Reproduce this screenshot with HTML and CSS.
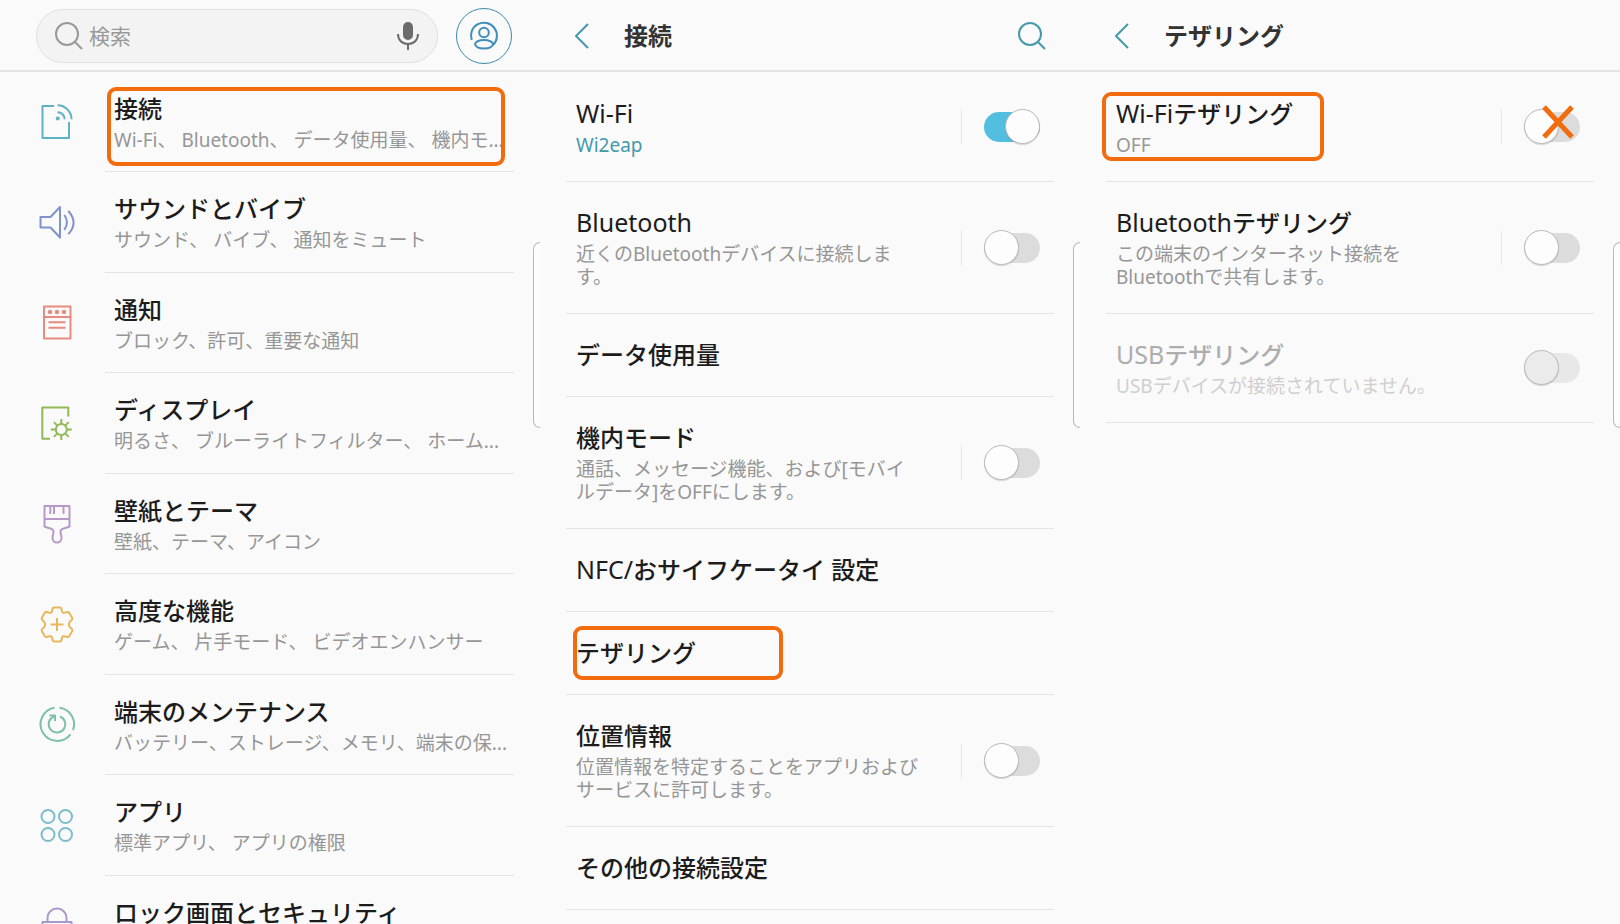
FILE: index.html
```
<!DOCTYPE html>
<html lang="ja">
<head>
    <meta charset="UTF-8">
    <meta name="viewport" content="width=device-width, initial-scale=1.0">
    <title>設定</title>
    <link rel="stylesheet" href="styles.css">
</head>
<body>
    <main class="screens">

        <!-- settings -->
        <section class="screen">
            <header class="bar search-bar">
                <label class="search">
                    <svg class="search-icon" viewBox="0 0 28 28"><circle cx="12" cy="12" r="11"/><path d="M20 20l7 7"/></svg>
                    <input type="text" placeholder="検索" aria-label="検索">
                    <button class="mic" type="button" aria-label="音声検索">
                        <svg viewBox="0 0 22 30"><rect class="mic-body" x="6" y="1" width="10" height="18" rx="5"/><path d="M1 13c0 6 4 10 10 10s10-4 10-10M11 23v6"/></svg>
                    </button>
                </label>
                <button class="account" type="button" aria-label="アカウント">
                    <svg viewBox="0 0 28 28"><path d="M1.700 18A13 13 0 1 1 23 23"/><circle cx="14" cy="10.500" r="4.800"/><ellipse cx="14" cy="22.300" rx="9" ry="4.300"/></svg>
                </button>
            </header>
            <nav class="menu">
                <a class="item" href="#">
                    <svg class="icon teal" viewBox="0 0 40 40"><path d="M17 4H5.500v32H32V20M20.500 10.300a7 7 0 0 1 7.200 7M20.500 3.300a14 14 0 0 1 14 14"/><circle class="dot" cx="20.700" cy="16.500" r="2"/></svg>
                    <span class="text">
                        <span class="title">接続</span>
                        <span class="sub">Wi-Fi、 Bluetooth、 データ使用量、 機内モ...</span>
                        <span class="mark mark-connect"></span>
                    </span>
                </a>
                <a class="item" href="#">
                    <svg class="icon blue" viewBox="0 0 40 40"><path d="M3.500 14h10L23 4v30.500l-9.500-10h-10zM27.300 12q5.400 7.400 0 14.800M31.300 8q10.600 11.500 0 23.200"/></svg>
                    <span class="text">
                        <span class="title">サウンドとバイブ</span>
                        <span class="sub">サウンド、 バイブ、 通知をミュート</span>
                    </span>
                </a>
                <a class="item" href="#">
                    <svg class="icon red" viewBox="0 0 40 40"><path d="M7 3.500h26.500v32H7zM7 14h26.500M11.500 19.300h17M11.500 24.700h17"/><g class="dot"><circle cx="13" cy="9" r="2.200"/><circle cx="20" cy="9" r="2.200"/><circle cx="27" cy="9" r="2.200"/></g></svg>
                    <span class="text">
                        <span class="title">通知</span>
                        <span class="sub">ブロック、許可、重要な通知</span>
                    </span>
                </a>
                <a class="item" href="#">
                    <svg class="icon green" viewBox="0 0 40 40"><path d="M31.300 12.500V3.500h-26v31.300H13"/><circle cx="24.300" cy="25.500" r="5.500"/><path d="M24.300 20v-5M24.300 31v5M18.800 25.500h-5M29.800 25.500h5M20.400 21.600l-3.500-3.500M28.200 29.400l3.500 3.500M28.200 21.600l3.500-3.500M20.400 29.400l-3.500 3.500"/></svg>
                    <span class="text">
                        <span class="title">ディスプレイ</span>
                        <span class="sub">明るさ、 ブルーライトフィルター、 ホーム...</span>
                    </span>
                </a>
                <a class="item" href="#">
                    <svg class="icon purple" viewBox="0 0 40 40"><path d="M7.500 2h25v20.500c-4 2-9 1.500-9 5 0 2.500 1 4 1 6.500a4.500 4.500 0 0 1-9 0c0-2.500 1-4 1-6.500 0-3.500-5-3-9-5zM7.500 15h25M13.300 2v8M17 2v8M26.500 2v8"/></svg>
                    <span class="text">
                        <span class="title">壁紙とテーマ</span>
                        <span class="sub">壁紙、テーマ、アイコン</span>
                    </span>
                </a>
                <a class="item" href="#">
                    <svg class="icon yellow" viewBox="0 0 40 40"><path d="M17 2.500h6q1.200 0 1.500 1.500l.5 2.500q.4 1.400 1.800 1.400l3.600-.9q1.200-.2 1.900.9l2.800 4.800q.7 1.300-.3 2.200l-1.900 1.900q-1 1.100-1 2.700t1 2.700l1.900 1.900q1 .9.300 2.200l-2.800 4.800q-.7 1.100-1.900.9l-3.600-.9q-1.400 0-1.800 1.400l-.5 2.500q-.3 1.500-1.500 1.500h-6q-1.200 0-1.500-1.500l-.5-2.500q-.4-1.400-1.800-1.400l-3.600.9q-1.200.2-1.900-.9l-2.800-4.800q-.7-1.300.3-2.200l1.900-1.900q1-1.100 1-2.700t-1-2.700l-1.900-1.900q-1-.9-.3-2.200l2.800-4.800q.7-1.100 1.900-.9l3.600.9q1.400 0 1.800-1.400l.5-2.500q.3-1.500 1.500-1.500zM20 13v13M13.500 19.500h13"/></svg>
                    <span class="text">
                        <span class="title">高度な機能</span>
                        <span class="sub">ゲーム、 片手モード、 ビデオエンハンサー</span>
                    </span>
                </a>
                <a class="item" href="#">
                    <svg class="icon mint" viewBox="0 0 40 40"><path d="M22.500 2.700a16.700 16.700 0 0 1 13.500 22.500M33.500 29.300A16.700 16.700 0 1 1 17.500 2.700M23 11.500A8.300 8.300 0 1 1 14 13.500L17.500 11M12.500 10.500h5.500V16"/></svg>
                    <span class="text">
                        <span class="title">端末のメンテナンス</span>
                        <span class="sub">バッテリー、ストレージ、メモリ、端末の保...</span>
                    </span>
                </a>
                <a class="item" href="#">
                    <svg class="icon sky" viewBox="0 0 40 40"><circle cx="11" cy="10.500" r="6.500"/><circle cx="28.500" cy="10.500" r="6.500"/><circle cx="11" cy="28.500" r="6.500"/><circle cx="28.500" cy="28.500" r="6.500"/></svg>
                    <span class="text">
                        <span class="title">アプリ</span>
                        <span class="sub">標準アプリ、 アプリの権限</span>
                    </span>
                </a>
                <a class="item" href="#">
                    <svg class="icon violet" viewBox="0 0 40 40"><path d="M10.500 16v-4a9.500 9.500 0 0 1 19 0v4M5.500 16h29v20h-29z"/></svg>
                    <span class="text">
                        <span class="title">ロック画面とセキュリティ</span>
                    </span>
                </a>
            </nav>
            <span class="edge"></span>
        </section>

        <!-- connections -->
        <section class="screen">
            <header class="bar">
                <button class="back" type="button" aria-label="戻る">
                    <svg viewBox="0 0 16 26"><path d="M14 1L2 13l12 12"/></svg>
                </button>
                <h1>接続</h1>
                <button class="find" type="button" aria-label="検索">
                    <svg viewBox="0 0 28 28"><circle cx="12" cy="12" r="11"/><path d="M20 20l7 7"/></svg>
                </button>
            </header>
            <div class="list">
                <div class="row">
                    <label class="text" for="wifi">
                        <span class="title"><span class="latin">Wi-Fi</span></span>
                        <span class="sub on">Wi2eap</span>
                    </label>
                    <span class="toggle"><input type="checkbox" id="wifi" checked></span>
                </div>
                <div class="row">
                    <label class="text" for="bluetooth">
                        <span class="title"><span class="latin">Bluetooth</span></span>
                        <span class="sub">近くのBluetoothデバイスに接続します。</span>
                    </label>
                    <span class="toggle"><input type="checkbox" id="bluetooth"></span>
                </div>
                <a class="row" href="#"><span class="title">データ使用量</span></a>
                <div class="row">
                    <label class="text" for="airplane">
                        <span class="title">機内モード</span>
                        <span class="sub">通話、メッセージ機能、および[モバイルデータ]をOFFにします。</span>
                    </label>
                    <span class="toggle"><input type="checkbox" id="airplane"></span>
                </div>
                <a class="row" href="#"><span class="title"><span class="latin">NFC/</span>おサイフケータイ 設定</span></a>
                <a class="row" href="#"><span class="title">テザリング</span><span class="mark mark-tether"></span></a>
                <div class="row">
                    <label class="text" for="location">
                        <span class="title">位置情報</span>
                        <span class="sub">位置情報を特定することをアプリおよびサービスに許可します。</span>
                    </label>
                    <span class="toggle"><input type="checkbox" id="location"></span>
                </div>
                <a class="row" href="#"><span class="title">その他の接続設定</span></a>
            </div>
            <span class="edge"></span>
        </section>

        <!-- tethering -->
        <section class="screen">
            <header class="bar">
                <button class="back" type="button" aria-label="戻る">
                    <svg viewBox="0 0 16 26"><path d="M14 1L2 13l12 12"/></svg>
                </button>
                <h1>テザリング</h1>
            </header>
            <div class="list">
                <div class="row">
                    <label class="text" for="wifi-tether">
                        <span class="title"><span class="latin">Wi-Fi</span>テザリング</span>
                        <span class="sub">OFF</span>
                    </label>
                    <span class="toggle">
                        <input type="checkbox" id="wifi-tether">
                        <svg class="cross" viewBox="0 0 32 34"><path d="M2 2l28 30M30 2L2 32"/></svg>
                    </span>
                    <span class="mark mark-wifi"></span>
                </div>
                <div class="row">
                    <label class="text" for="bt-tether">
                        <span class="title"><span class="latin">Bluetooth</span>テザリング</span>
                        <span class="sub">この端末のインターネット接続をBluetoothで共有します。</span>
                    </label>
                    <span class="toggle"><input type="checkbox" id="bt-tether"></span>
                </div>
                <div class="row disabled">
                    <label class="text" for="usb-tether">
                        <span class="title"><span class="latin">USB</span>テザリング</span>
                        <span class="sub">USBデバイスが接続されていません。</span>
                    </label>
                    <span class="toggle"><input type="checkbox" id="usb-tether" disabled></span>
                </div>
            </div>
            <span class="edge"></span>
        </section>

    </main>
</body>
</html>
```
FILE: styles.css
```
* {
    margin: 0;
    padding: 0;
    box-sizing: border-box;
}
body {
    font-family: "Noto Sans", "Noto Sans CJK JP", sans-serif;
    background-color: #fafafa;
    color: #1c1c1c;
    overflow: hidden;
}
a {
    color: inherit;
    text-decoration: none;
}
button {
    background: none;
    border: none;
    cursor: pointer;
}
svg {
    display: block;
    fill: none;
    stroke: currentColor;
    stroke-width: 2;
    stroke-linejoin: round;
    overflow: visible;
}
.screens {
    display: grid;
    grid-template-columns: repeat(3, 1fr);
    height: 100vh;
}
.screen {
    position: relative;
    min-width: 0;
    overflow: hidden;
}

/* top bars */
.bar {
    display: flex;
    align-items: center;
    height: 72px;
    padding: 2px 34px 0;
    border-bottom: 2px solid #e4e4e4;
}
.bar h1 {
    flex: 1;
    margin-left: 34px;
    font-size: 24px;
    line-height: 34px;
    font-weight: 700;
    color: #333;
}
.back, .find {
    color: #4499ab;
}
.back svg {
    width: 16px;
    height: 26px;
}
.find svg {
    width: 28px;
    height: 28px;
}
.search-bar {
    gap: 18px;
    padding: 2px 28px 0 36px;
}
.search {
    flex: 1;
    display: flex;
    align-items: center;
    gap: 6px;
    height: 54px;
    padding: 0 18px;
    background-color: #f3f3f3;
    border: 1px solid #e0e0e0;
    border-radius: 27px;
}
.search-icon {
    width: 28px;
    height: 28px;
    color: #999;
}
.search input {
    flex: 1;
    min-width: 0;
    border: none;
    outline: none;
    background: none;
    font: inherit;
    font-size: 21px;
}
.search input::placeholder {
    color: #999;
}
.mic {
    color: #6b6b6b;
}
.mic svg {
    width: 22px;
    height: 30px;
}
.mic-body {
    fill: currentColor;
    stroke: none;
}
.account {
    display: flex;
    align-items: center;
    justify-content: center;
    width: 56px;
    height: 56px;
    border: 1px solid #3f87ad;
    border-radius: 50%;
    color: #3f8fb8;
}
.account svg {
    width: 28px;
    height: 28px;
}

/* shared text */
.text {
    display: block;
    flex: 1;
    min-width: 0;
}
.title, .sub {
    display: block;
}
.title {
    font-size: 24px;
    line-height: 34px;
    font-weight: 500;
}
.latin {
    font-size: 25px;
    line-height: 25px;
    font-weight: 400;
}
.sub {
    margin-top: 3px;
    font-size: 19px;
    line-height: 23px;
    color: #969696;
}
.sub.on {
    color: #4499ab;
}

/* main menu */
.item {
    display: flex;
    align-items: center;
    gap: 28px;
    height: 100px;
    padding: 0 26px 0 37px;
}
.item:nth-child(even) {
    height: 101px;
}
.item .text {
    position: relative;
    height: 100%;
    padding: 20px 0 0 9px;
    border-bottom: 1px solid #e4e4e4;
}
.item .sub {
    white-space: nowrap;
}
.icon {
    width: 40px;
    height: 40px;
}
.icon .dot {
    fill: currentColor;
    stroke: none;
}
.teal { color: #5fb2c2; }
.blue { color: #7f93cc; }
.red { color: #e58b80; }
.green { color: #92b958; }
.purple { color: #b898c8; }
.yellow { color: #e8b75a; }
.mint { color: #7cc0a8; }
.sky { color: #7dbccb; }
.violet { color: #a69acb; }

/* option lists */
.list {
    padding: 1px 26px 0;
}
.row {
    position: relative;
    display: flex;
    align-items: center;
    padding: 24px 14px 24px 10px;
    border-bottom: 1px solid #e4e4e4;
}
.row .text {
    padding-right: 40px;
}
.toggle {
    position: relative;
    display: flex;
    align-items: center;
    height: 34px;
    padding-left: 22px;
    border-left: 1px solid #e6e6e6;
}
.toggle input {
    appearance: none;
    position: relative;
    width: 56px;
    height: 30px;
    border-radius: 15px;
    background-color: #dcdcdc;
    cursor: pointer;
}
.toggle input::after {
    content: "";
    position: absolute;
    top: -3px;
    left: 0;
    width: 33px;
    height: 33px;
    border: 1px solid #bababa;
    border-radius: 50%;
    background-color: #fdfdfd;
    box-shadow: 0 1px 1px rgba(0, 0, 0, 0.15);
}
.toggle input:checked {
    background-color: #52bfe0;
}
.toggle input:checked::after {
    left: auto;
    right: 0;
}
.disabled .title {
    color: #adadad;
}
.disabled .sub {
    color: #cfcfcf;
}
.disabled .toggle {
    border-color: transparent;
}
.disabled .toggle input {
    background-color: #e8e8e8;
}
.disabled .toggle input::after {
    background-color: #ebebeb;
}

/* edge panel handle */
.edge {
    position: absolute;
    top: 242px;
    right: 0;
    width: 7px;
    height: 186px;
    border: 1px solid #b8b8b8;
    border-right: none;
    border-radius: 7px 0 0 7px;
    background-color: #fdfdfd;
}

/* orange callouts */
.mark {
    position: absolute;
    border: 4px solid #f26c0d;
    border-radius: 9px;
    pointer-events: none;
}
.mark-connect {
    top: 15px;
    right: 9px;
    bottom: 5px;
    left: 2px;
}
.mark-tether {
    top: 14px;
    bottom: 14px;
    left: 7px;
    width: 210px;
}
.mark-wifi {
    top: 19px;
    bottom: 20px;
    left: -4px;
    width: 222px;
}
.cross {
    position: absolute;
    top: -5px;
    right: 6px;
    width: 32px;
    height: 34px;
    color: #f26c0d;
    stroke-width: 5;
    pointer-events: none;
}
```
